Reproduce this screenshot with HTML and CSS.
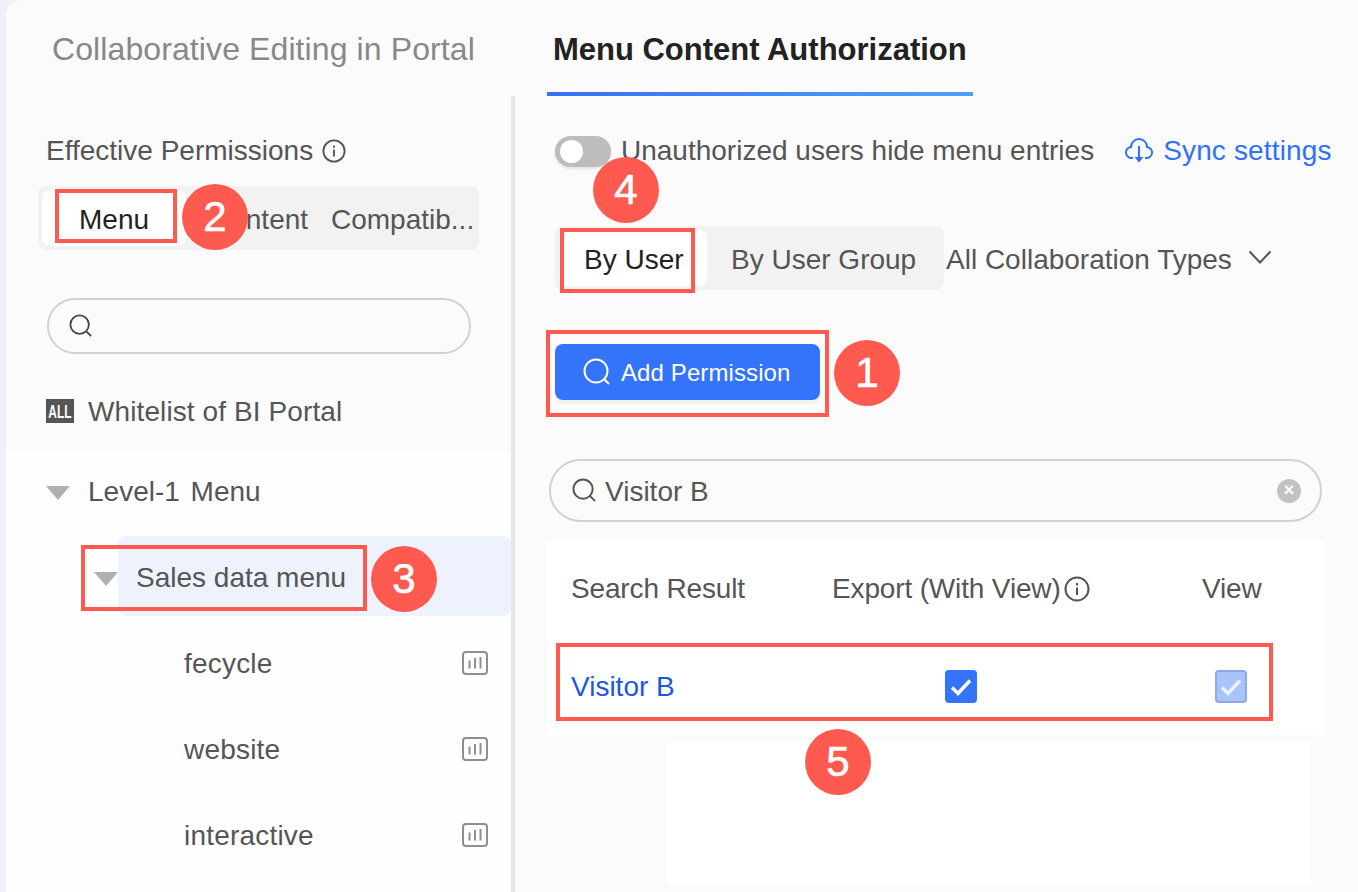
FILE: index.html
```html
<!DOCTYPE html>
<html lang="en">
<head>
    <meta charset="UTF-8">
    <meta name="viewport" content="width=device-width, initial-scale=1.0">
    <title>Menu Content Authorization</title>
    <link rel="stylesheet" href="styles.css">
</head>
<body>
    <div class="panel">
        <nav class="tabs">
            <span class="tab">Collaborative Editing in Portal</span>
            <span class="tab tab-active">Menu Content Authorization</span>
        </nav>

        <div class="columns">
            <aside class="left">
                <div class="left-top">
                    <div class="perm-title">
                        Effective Permissions
                        <svg class="info" viewBox="0 0 26 26"><circle cx="13" cy="13" r="11.5"/><path d="M13 11.5V19M13 7v2.4"/></svg>
                    </div>
                    <div class="segment segment-left">
                        <span class="seg-item seg-active seg-menu">Menu</span>
                        <span class="seg-item seg-content">Content</span>
                        <span class="seg-item seg-compat">Compatib...</span>
                    </div>
                    <div class="search search-left">
                        <svg class="search-icon" viewBox="0 0 26 26"><circle cx="11.5" cy="11.5" r="10"/><path d="M19 19l5 5"/></svg>
                    </div>
                    <div class="whitelist">
                        <svg class="all-icon" viewBox="0 0 28 24"><rect width="28" height="24"/><text transform="translate(14 18.500) scale(.85 1.3)" text-anchor="middle">ALL</text></svg>
                        <span class="whitelist-label">Whitelist of BI Portal</span>
                    </div>
                </div>

                <ul class="tree">
                    <li class="tree-row tree-level1"><i class="caret"></i>Level-1 Menu</li>
                    <li class="tree-row tree-level2">
                        <i class="caret"></i>
                        <span class="tree-selected">Sales data menu</span>
                    </li>
                    <li class="tree-row tree-leaf">fecycle
                        <svg class="chart-icon" viewBox="0 0 26 24"><rect x="1" y="1" width="24" height="22" rx="3"/><path d="M7.5 9.5v8M13 7v10.5M18.5 6v11.5"/></svg>
                    </li>
                    <li class="tree-row tree-leaf">website
                        <svg class="chart-icon" viewBox="0 0 26 24"><rect x="1" y="1" width="24" height="22" rx="3"/><path d="M7.5 9.5v8M13 7v10.5M18.5 6v11.5"/></svg>
                    </li>
                    <li class="tree-row tree-leaf">interactive
                        <svg class="chart-icon" viewBox="0 0 26 24"><rect x="1" y="1" width="24" height="22" rx="3"/><path d="M7.5 9.5v8M13 7v10.5M18.5 6v11.5"/></svg>
                    </li>
                </ul>
            </aside>

            <main class="right">
                <div class="toggle-row">
                    <span class="toggle"><i class="knob"></i></span>
                    <span class="toggle-label">Unauthorized users hide menu entries</span>
                    <span class="sync">
                        <svg class="sync-icon" viewBox="0 0 28 26"><path d="M8 21H7a5.5 5.5 0 0 1-1-11 8 8 0 0 1 16 0 5.5 5.5 0 0 1-1 11h-1"/><path d="M14 9v13"/><path class="sync-head" d="M9.5 20h9L14 25.5z"/></svg>
                        Sync settings
                    </span>
                </div>

                <div class="filter-row">
                    <div class="segment segment-right">
                        <span class="seg-item seg-active seg-user">By User</span>
                        <span class="seg-item seg-group">By User Group</span>
                    </div>
                    <span class="filter-select">All Collaboration Types
                        <svg class="chevron" viewBox="0 0 24 14"><path d="M1.5 1.5L12 12.5 22.5 1.5"/></svg>
                    </span>
                </div>

                <button class="add-button">
                    <svg class="add-icon" viewBox="0 0 28 28"><circle cx="13" cy="13" r="11.5"/><path d="M21 21l5 5"/></svg>
                    Add Permission
                </button>

                <div class="search search-right">
                    <svg class="search-icon-small" viewBox="0 0 26 26"><circle cx="11.5" cy="11.5" r="10"/><path d="M19 19l5 5"/></svg>
                    <span class="search-value">Visitor B</span>
                    <span class="clear">×</span>
                </div>

                <div class="result">
                    <div class="result-row result-head">
                        <span class="col-name">Search Result</span>
                        <span class="col-export">Export (With View)<svg class="info info-head" viewBox="0 0 26 26"><circle cx="13" cy="13" r="11.5"/><path d="M13 11.5V19M13 7v2.4"/></svg></span>
                        <span class="col-view">View</span>
                    </div>
                    <div class="result-row">
                        <span class="col-name visitor">Visitor B</span>
                        <span class="col-export col-check"><span class="check"><svg viewBox="0 0 32 32"><path d="M7 17l6 6 12-13"/></svg></span></span>
                        <span class="col-view col-check"><span class="check check-off"><svg viewBox="0 0 28 28"><path d="M5 15l6 6 12-13"/></svg></span></span>
                    </div>
                </div>

                <div class="blank"></div>
            </main>
        </div>
    </div>

    <!-- annotations on top of the screenshot -->
    <div class="mark mark-1"></div>
    <div class="mark mark-2"></div>
    <div class="mark mark-3"></div>
    <div class="mark mark-4"></div>
    <div class="mark mark-5"></div>
    <div class="dot dot-1">1</div>
    <div class="dot dot-2">2</div>
    <div class="dot dot-3">3</div>
    <div class="dot dot-4">4</div>
    <div class="dot dot-5">5</div>
</body>
</html>
```

FILE: styles.css
```css
* {
    box-sizing: border-box;
}

html, body {
    height: 892px;
}

body {
    margin: 0;
    padding-left: 6px;
    overflow: hidden;
    position: relative;
    background-color: #eff1f8;
    font-family: "Liberation Sans", Arial, sans-serif;
    font-size: 28px;
    color: #555;
}

.panel {
    height: 892px;
    background-color: #fbfbfb;
    border-top-left-radius: 16px;
}

.tabs {
    display: flex;
    height: 96px;
    align-items: flex-start;
}

.tab {
    margin-left: 46px;
    padding-top: 29px;
    font-size: 32px;
    line-height: 40px;
    letter-spacing: 0.1px;
    color: #888;
}

.tab-active {
    margin-left: 72px;
    width: 426px;
    height: 96px;
    padding-left: 6px;
    font-size: 31px;
    padding-top: 30px;
    letter-spacing: 0;
    color: #222;
    font-weight: bold;
    border-bottom: 4px solid transparent;
    border-image: linear-gradient(90deg, #3a6ff5, #50a0f9) 1;
}

.columns {
    display: flex;
    height: 796px;
}

/* left side */
.left {
    display: flex;
    flex-direction: column;
    width: 509px;
    flex-shrink: 0;
    border-right: 4px solid #e6e6e6;
}

.left-top {
    height: 354px;
    flex-shrink: 0;
    padding: 35px 0 0 40px;
}

.perm-title {
    display: flex;
    align-items: center;
    gap: 9px;
    height: 40px;
}

.info {
    width: 24px;
    height: 24px;
    fill: none;
    stroke: #555;
    stroke-width: 2;
}

.segment {
    display: flex;
    height: 64px;
    padding: 4px;
    border-radius: 8px;
    background-color: #f2f2f2;
}

.segment-left {
    width: 441px;
    margin: 15px 0 0 -8px;
    overflow: hidden;
}

.seg-item {
    display: flex;
    align-items: center;
    flex-shrink: 0;
    height: 56px;
    padding-top: 4px;
}

.seg-active {
    background-color: #fff;
    border-radius: 8px;
    color: #222;
}

.seg-menu {
    width: 144px;
    padding-left: 37px;
}

.seg-content {
    width: 145px;
    padding-left: 24px;
}

.seg-compat {
    padding-left: 0;
}

.search {
    display: flex;
    align-items: center;
    border: 2px solid #d2d2d2;
    border-radius: 32px;
}

.search-left {
    width: 424px;
    height: 56px;
    margin: 48px 0 0 1px;
    padding-left: 20px;
}

.search-icon {
    width: 24px;
    height: 24px;
    fill: none;
    stroke: #444;
    stroke-width: 2;
}

.whitelist {
    display: flex;
    align-items: center;
    gap: 14px;
    height: 40px;
    margin-top: 37px;
    letter-spacing: 0.1px;
}

.whitelist-label {
    padding-top: 2px;
}

.all-icon {
    width: 28px;
    height: 24px;
}

.all-icon rect {
    fill: #555;
}

.all-icon text {
    fill: #fff;
    font-size: 14px;
    font-weight: bold;
}

.tree {
    flex: 1;
    list-style: none;
    margin: 0;
    padding: 0;
    background-color: #fefefe;
}

.tree-row {
    display: flex;
    align-items: center;
}

.tree-level1 {
    height: 86px;
    padding: 0 0 2px 40px;
    word-spacing: 3px;
}

.caret {
    display: block;
    width: 0;
    height: 0;
    border-left: 12px solid transparent;
    border-right: 12px solid transparent;
    border-top: 14px solid #b0b0b0;
}

.tree-level1 .caret {
    margin: 2px 18px 0 0;
}

.tree-level2 {
    height: 84px;
    padding: 0 0 4px 88px;
}

.tree-level2 .caret {
    margin-top: 6px;
}

.tree-selected {
    display: flex;
    align-items: center;
    width: 393px;
    height: 80px;
    padding: 4px 0 0 18px;
    border-radius: 8px;
    background-color: #eef2fd;
}

.tree-leaf {
    justify-content: space-between;
    height: 86px;
    padding: 2px 23px 0 178px;
    letter-spacing: 0.2px;
}

.chart-icon {
    width: 26px;
    height: 24px;
    margin-top: -2px;
    fill: none;
    stroke: #8f8f8f;
    stroke-width: 2;
}

/* right side */
.right {
    flex: 1;
    padding: 34px 0 0 40px;
}

.toggle-row {
    display: flex;
    align-items: center;
    height: 40px;
}

.toggle {
    display: block;
    width: 56px;
    height: 31px;
    margin-top: 3px;
    padding: 4px 5px;
    border-radius: 16px;
    background-color: #bdbdbd;
    box-shadow: 0 2px 3px #e4e4e4;
}

.knob {
    display: block;
    width: 23px;
    height: 23px;
    border-radius: 50%;
    background-color: #fff;
}

.toggle-label {
    margin-left: 10px;
    padding-top: 2px;
}

.sync {
    display: flex;
    align-items: center;
    margin-left: 31px;
    gap: 10px;
    padding-top: 2px;
    color: #2f72f7;
    letter-spacing: 0.15px;
}

.sync-icon {
    width: 28px;
    height: 26px;
    margin-top: -3px;
    fill: none;
    stroke: #2f72f7;
    stroke-width: 2;
}

.sync-head {
    fill: #2f72f7;
    stroke: none;
}

.filter-row {
    display: flex;
    align-items: center;
    margin-top: 56px;
}

.segment-right {
    width: 389px;
}

.seg-user {
    width: 148px;
    padding-left: 25px;
}

.seg-group {
    padding-left: 24px;
}

.filter-select {
    display: flex;
    align-items: center;
    margin-left: 2px;
    padding-top: 4px;
}

.chevron {
    width: 24px;
    height: 14px;
    margin: -6px 0 0 16px;
    fill: none;
    stroke: #555;
    stroke-width: 2;
}

.add-button {
    display: flex;
    align-items: center;
    gap: 10px;
    width: 265px;
    height: 56px;
    margin-top: 54px;
    padding: 2px 0 0 28px;
    border: none;
    border-radius: 8px;
    background-color: #3374fb;
    color: #fff;
    font-family: inherit;
    font-size: 24px;
    letter-spacing: 0.1px;
    box-shadow: 0 4px 0 #f2f2f2;
}

.add-icon {
    width: 28px;
    height: 28px;
    margin-top: -2px;
    fill: none;
    stroke: #fff;
    stroke-width: 2;
}

.search-right {
    width: 773px;
    height: 63px;
    margin: 59px 0 0 -6px;
    padding: 0 19px 0 21px;
}

.search-icon-small {
    width: 25px;
    height: 25px;
    fill: none;
    stroke: #555;
    stroke-width: 2;
}

.search-value {
    flex: 1;
    margin-left: 8px;
    padding-top: 2px;
}

.clear {
    display: flex;
    align-items: center;
    justify-content: center;
    width: 24px;
    height: 24px;
    border-radius: 50%;
    background-color: #c2c2c2;
    color: #fff;
    font-size: 18px;
    font-weight: bold;
}

.result {
    width: 778px;
    height: 195px;
    margin: 18px 0 0 -9px;
    background-color: #fff;
}

.result-row {
    display: flex;
    align-items: center;
    height: 100px;
    padding: 2px 0 0 25px;
}

.result-head {
    height: 96px;
    letter-spacing: -0.15px;
}

.col-name {
    width: 261px;
}

.col-export {
    display: flex;
    align-items: center;
    width: 370px;
}

.info-head {
    width: 26px;
    height: 26px;
    margin-left: 3px;
}

.col-view {
    width: 60px;
}

.col-check {
    padding-left: 113px;
}

.col-check.col-view {
    padding-left: 13px;
}

.visitor {
    color: #2157dc;
}

.check {
    display: flex;
    width: 32px;
    height: 33px;
    margin-top: -2px;
    border-radius: 4px;
    background-color: #3374fb;
}

.check svg {
    fill: none;
    stroke: #fff;
    stroke-width: 3.5;
}

.check-off {
    background-color: #a9c4fd;
    border: 2px solid #90a9e6;
}

.check-off svg {
    stroke: #eef2fb;
}

.blank {
    width: 643px;
    height: 143px;
    margin: 7px 0 0 112px;
    background-color: #fff;
}

/* annotations */
.mark {
    position: absolute;
    border: 4px solid #ff5a4f;
}

.mark-1 { left: 546px; top: 330px; width: 283px; height: 87px; }
.mark-2 { left: 55px; top: 189px; width: 122px; height: 54px; }
.mark-3 { left: 81px; top: 545px; width: 286px; height: 66px; }
.mark-4 { left: 560px; top: 228px; width: 135px; height: 65px; }
.mark-5 { left: 556px; top: 643px; width: 717px; height: 78px; }

.dot {
    position: absolute;
    display: flex;
    align-items: center;
    justify-content: center;
    width: 66px;
    height: 66px;
    border-radius: 50%;
    background-color: #ff5a4f;
    color: #fff;
    font-size: 42px;
    -webkit-text-stroke: 0.6px #fff;
}

.dot-1 { left: 834px; top: 340px; }
.dot-2 { left: 182px; top: 184px; }
.dot-3 { left: 371px; top: 546px; }
.dot-4 { left: 593px; top: 157px; }
.dot-5 { left: 805px; top: 729px; }
```
